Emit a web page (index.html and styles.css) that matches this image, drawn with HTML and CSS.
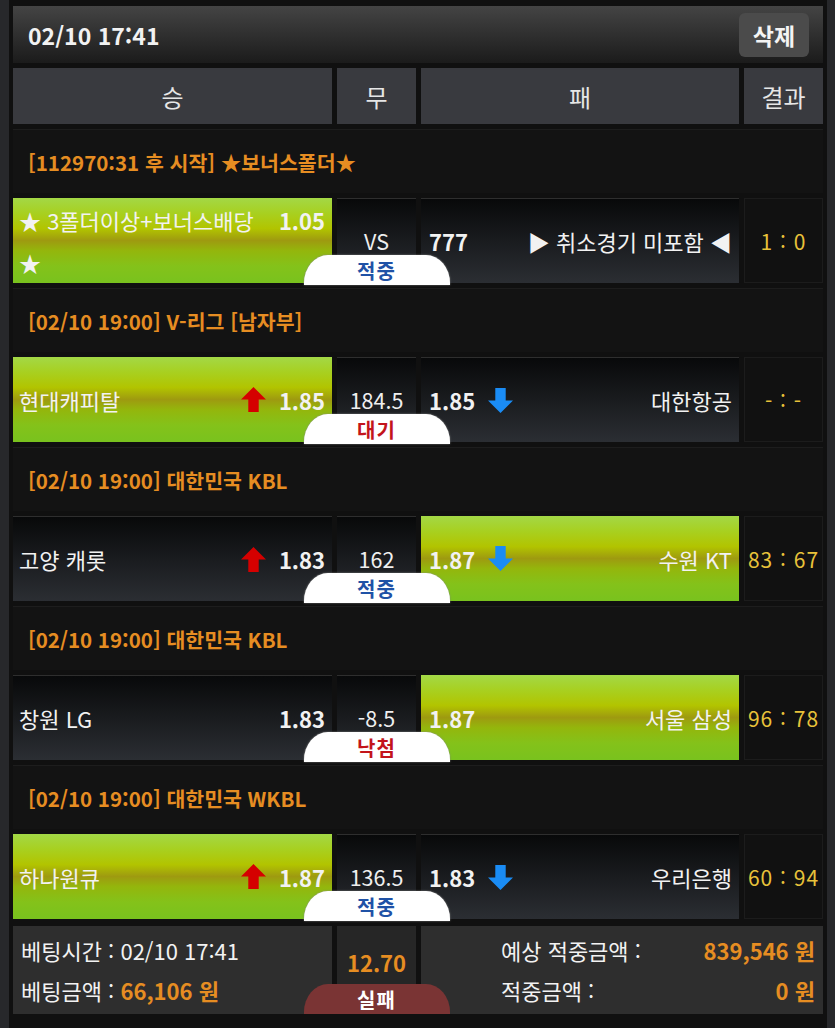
FILE: index.html
```html
<!DOCTYPE html>
<html lang="ko">
<head>
    <meta charset="UTF-8">
    <meta name="viewport" content="width=device-width, initial-scale=1.0">
    <title>Bet Slip</title>
    <link rel="stylesheet" href="styles.css">
</head>
<body>
    <div class="board">
        <div class="head">
            <span class="stamp">02/10 17:41</span>
            <button class="del">삭제</button>
        </div>

        <div class="cols">
            <div class="col">승</div>
            <div class="col">무</div>
            <div class="col">패</div>
            <div class="col">결과</div>
        </div>

        <div class="title">[112970:31 후 시작] ★보너스폴더★</div>
        <div class="match">
            <div class="cell home pick">
                <div class="side">
                    <span class="name">★ 3폴더이상+보너스배당 ★</span>
                    <span class="odds">1.05</span>
                </div>
            </div>
            <div class="cell draw">VS<span class="badge hit">적중</span></div>
            <div class="cell away">
                <div class="side">
                    <span class="odds">777</span>
                    <span class="name right">▶ 취소경기 미포함 ◀</span>
                </div>
            </div>
            <div class="cell score">1 : 0</div>
        </div>

        <div class="title">[02/10 19:00] V-리그 [남자부]</div>
        <div class="match">
            <div class="cell home pick">
                <div class="side">
                    <span class="name">현대캐피탈</span>
                    <svg class="arrow" viewBox="0 0 24 24"><polygon points="12,0 24,12 17,12 17,24 7,24 7,12 0,12" fill="#d50000"/></svg>
                    <span class="odds">1.85</span>
                </div>
            </div>
            <div class="cell draw">184.5<span class="badge wait">대기</span></div>
            <div class="cell away">
                <div class="side">
                    <span class="odds">1.85</span>
                    <svg class="arrow" viewBox="0 0 24 24"><polygon points="12,24 24,12 17,12 17,0 7,0 7,12 0,12" fill="#1a8cf5"/></svg>
                    <span class="name right">대한항공</span>
                </div>
            </div>
            <div class="cell score">- : -</div>
        </div>

        <div class="title">[02/10 19:00] 대한민국 KBL</div>
        <div class="match">
            <div class="cell home">
                <div class="side">
                    <span class="name">고양 캐롯</span>
                    <svg class="arrow" viewBox="0 0 24 24"><polygon points="12,0 24,12 17,12 17,24 7,24 7,12 0,12" fill="#d50000"/></svg>
                    <span class="odds">1.83</span>
                </div>
            </div>
            <div class="cell draw">162<span class="badge hit">적중</span></div>
            <div class="cell away pick">
                <div class="side">
                    <span class="odds">1.87</span>
                    <svg class="arrow" viewBox="0 0 24 24"><polygon points="12,24 24,12 17,12 17,0 7,0 7,12 0,12" fill="#1a8cf5"/></svg>
                    <span class="name right">수원 KT</span>
                </div>
            </div>
            <div class="cell score">83 : 67</div>
        </div>

        <div class="title">[02/10 19:00] 대한민국 KBL</div>
        <div class="match">
            <div class="cell home">
                <div class="side">
                    <span class="name">창원 LG</span>
                    <span class="odds">1.83</span>
                </div>
            </div>
            <div class="cell draw">-8.5<span class="badge lost">낙첨</span></div>
            <div class="cell away pick">
                <div class="side">
                    <span class="odds">1.87</span>
                    <span class="name right">서울 삼성</span>
                </div>
            </div>
            <div class="cell score">96 : 78</div>
        </div>

        <div class="title">[02/10 19:00] 대한민국 WKBL</div>
        <div class="match">
            <div class="cell home pick">
                <div class="side">
                    <span class="name">하나원큐</span>
                    <svg class="arrow" viewBox="0 0 24 24"><polygon points="12,0 24,12 17,12 17,24 7,24 7,12 0,12" fill="#d50000"/></svg>
                    <span class="odds">1.87</span>
                </div>
            </div>
            <div class="cell draw">136.5<span class="badge hit">적중</span></div>
            <div class="cell away">
                <div class="side">
                    <span class="odds">1.83</span>
                    <svg class="arrow" viewBox="0 0 24 24"><polygon points="12,24 24,12 17,12 17,0 7,0 7,12 0,12" fill="#1a8cf5"/></svg>
                    <span class="name right">우리은행</span>
                </div>
            </div>
            <div class="cell score">60 : 94</div>
        </div>

        <div class="summary">
            <div class="sum-box">
                <div class="sum-line">베팅시간 : 02/10 17:41</div>
                <div class="sum-line">베팅금액 : <b class="amt">66,106 원</b></div>
            </div>
            <div class="sum-mid">
                <span class="total">12.70</span>
                <span class="badge fail">실패</span>
            </div>
            <div class="sum-box sum-right">
                <span>예상 적중금액 :</span><b class="amt">839,546 원</b>
                <span>적중금액 :</span><b class="amt">0 원</b>
            </div>
        </div>
    </div>
</body>
</html>
```

FILE: styles.css
```css
body {
    margin: 0;
    background-color: #27282b;
    font-family: "Noto Sans CJK KR", "Noto Sans", sans-serif;
    color: #f2f2f2;
}
.board {
    margin-left: 9px;
    width: 818px;
    min-height: 1028px;
    box-sizing: border-box;
    padding: 6px 4px 0 4px;
    background-color: #101010;
    display: flex;
    flex-direction: column;
    gap: 5px;
}
.head {
    height: 57px;
    display: flex;
    align-items: center;
    justify-content: space-between;
    padding: 0 14px 0 15px;
    background: linear-gradient(#444444, #1b1b1b);
}
.stamp {
    font-size: 23px;
    font-weight: bold;
}
.del {
    width: 70px;
    height: 44px;
    border: none;
    border-radius: 6px;
    background-color: #4b4b4b;
    color: #f4f4f4;
    font-family: inherit;
    font-size: 23px;
    font-weight: bold;
    padding: 0;
}
.cols, .match {
    display: grid;
    grid-template-columns: 319px 79px 318px 1fr;
    gap: 5px;
}
.col {
    height: 56px;
    display: flex;
    align-items: center;
    justify-content: center;
    background-color: #393a3f;
    font-size: 24px;
    color: #e6e6e6;
}
.title {
    height: 64px;
    display: flex;
    align-items: center;
    padding-left: 15px;
    background-color: #131313;
    border-top: 1px solid #1d1d1d;
    box-sizing: border-box;
    color: #e68d22;
    font-size: 20.5px;
    font-weight: bold;
}
.match {
    height: 85px;
}
.cell {
    display: flex;
    align-items: center;
    box-sizing: border-box;
    font-size: 22px;
    background: linear-gradient(#08090a, #2b2e33);
    border-top: 1px solid #2e2e2e;
}
.cell.pick {
    background: linear-gradient(#a3d846 0%, #a8d020 18%, #b2c400 36%, #9e9a10 50%, #94b60c 62%, #84c21a 80%, #79c21e 100%);
    border-top: none;
}
.home {
    padding: 0 7px 0 6px;
}
.away {
    padding: 0 7px 0 8px;
}
.side {
    width: 100%;
    display: flex;
    align-items: baseline;
}
.name {
    flex: 1;
    line-height: 42px;
}
.name.right {
    text-align: right;
}
.odds {
    font-weight: bold;
    font-size: 22px;
}
.arrow {
    width: 25px;
    height: 25px;
    align-self: center;
    margin: 0 13px;
}
.draw {
    position: relative;
    justify-content: center;
    padding-bottom: 2px;
    font-size: 21.5px;
    color: #efefef;
}
.score {
    justify-content: center;
    background: #111111;
    border: 1px solid #1c1c1c;
    color: #e8c23a;
    font-size: 21px;
    letter-spacing: 1px;
    white-space: nowrap;
}
.badge {
    position: absolute;
    left: 50%;
    bottom: -2px;
    width: 146px;
    height: 30px;
    margin-left: -73px;
    border-radius: 24px 24px 0 0 / 28px 28px 0 0;
    background-color: #ffffff;
    box-shadow: 0 0 2px #888888;
    display: flex;
    align-items: center;
    justify-content: center;
    font-size: 20px;
    font-weight: bold;
    letter-spacing: 1px;
}
.hit {
    color: #1f52a6;
}
.wait, .lost {
    color: #c3141b;
}
.fail {
    bottom: 0;
    background-color: #7a3434;
    box-shadow: none;
    color: #ffffff;
}
.summary {
    display: grid;
    grid-template-columns: 319px 79px 1fr;
    gap: 5px;
    height: 88px;
    margin-top: 2px;
}
.sum-box {
    background-color: #2e2e2e;
    padding: 4px 8px;
    display: flex;
    flex-direction: column;
    justify-content: center;
    font-size: 22px;
}
.sum-line {
    line-height: 40px;
}
.amt {
    color: #e68d22;
}
.sum-mid {
    position: relative;
    background-color: #262626;
    display: flex;
    justify-content: center;
    padding-top: 20px;
}
.total {
    color: #e68d22;
    font-weight: bold;
    font-size: 22px;
    line-height: 32px;
    height: 32px;
}
.sum-right {
    display: grid;
    grid-template-columns: auto auto;
    justify-content: space-between;
    align-content: center;
    padding: 4px 8px 4px 80px;
    line-height: 40px;
}
.sum-right .amt {
    text-align: right;
}
```
